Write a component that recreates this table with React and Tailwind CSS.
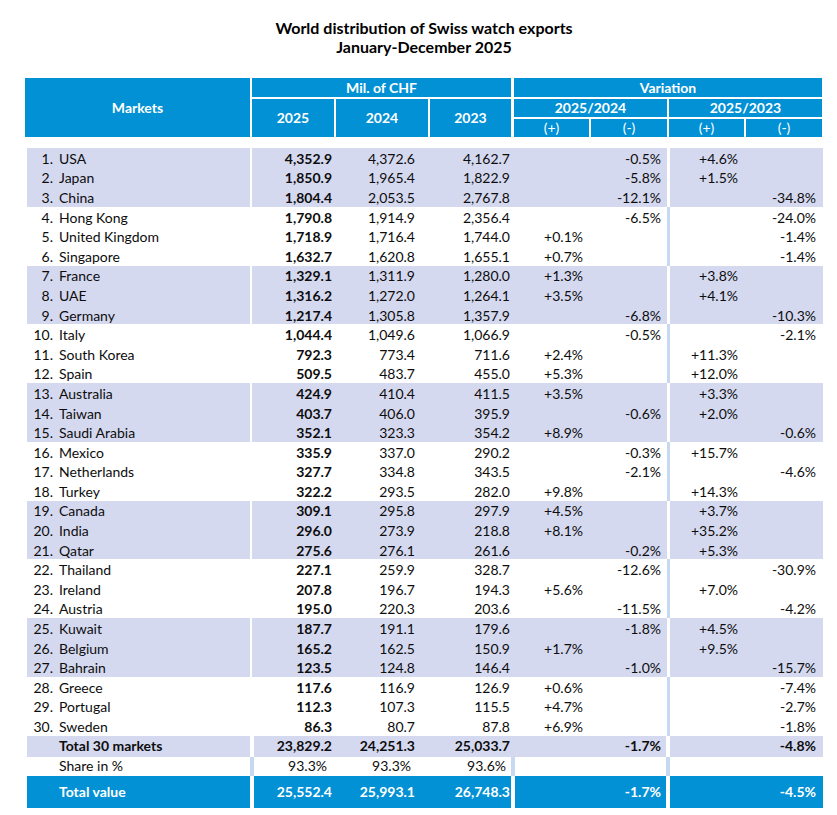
import React from 'react';

const rows = [
  ['1.', 'USA', '4,352.9', '4,372.6', '4,162.7', '', '-0.5%', '+4.6%', ''],
  ['2.', 'Japan', '1,850.9', '1,965.4', '1,822.9', '', '-5.8%', '+1.5%', ''],
  ['3.', 'China', '1,804.4', '2,053.5', '2,767.8', '', '-12.1%', '', '-34.8%'],
  ['4.', 'Hong Kong', '1,790.8', '1,914.9', '2,356.4', '', '-6.5%', '', '-24.0%'],
  ['5.', 'United Kingdom', '1,718.9', '1,716.4', '1,744.0', '+0.1%', '', '', '-1.4%'],
  ['6.', 'Singapore', '1,632.7', '1,620.8', '1,655.1', '+0.7%', '', '', '-1.4%'],
  ['7.', 'France', '1,329.1', '1,311.9', '1,280.0', '+1.3%', '', '+3.8%', ''],
  ['8.', 'UAE', '1,316.2', '1,272.0', '1,264.1', '+3.5%', '', '+4.1%', ''],
  ['9.', 'Germany', '1,217.4', '1,305.8', '1,357.9', '', '-6.8%', '', '-10.3%'],
  ['10.', 'Italy', '1,044.4', '1,049.6', '1,066.9', '', '-0.5%', '', '-2.1%'],
  ['11.', 'South Korea', '792.3', '773.4', '711.6', '+2.4%', '', '+11.3%', ''],
  ['12.', 'Spain', '509.5', '483.7', '455.0', '+5.3%', '', '+12.0%', ''],
  ['13.', 'Australia', '424.9', '410.4', '411.5', '+3.5%', '', '+3.3%', ''],
  ['14.', 'Taiwan', '403.7', '406.0', '395.9', '', '-0.6%', '+2.0%', ''],
  ['15.', 'Saudi Arabia', '352.1', '323.3', '354.2', '+8.9%', '', '', '-0.6%'],
  ['16.', 'Mexico', '335.9', '337.0', '290.2', '', '-0.3%', '+15.7%', ''],
  ['17.', 'Netherlands', '327.7', '334.8', '343.5', '', '-2.1%', '', '-4.6%'],
  ['18.', 'Turkey', '322.2', '293.5', '282.0', '+9.8%', '', '+14.3%', ''],
  ['19.', 'Canada', '309.1', '295.8', '297.9', '+4.5%', '', '+3.7%', ''],
  ['20.', 'India', '296.0', '273.9', '218.8', '+8.1%', '', '+35.2%', ''],
  ['21.', 'Qatar', '275.6', '276.1', '261.6', '', '-0.2%', '+5.3%', ''],
  ['22.', 'Thailand', '227.1', '259.9', '328.7', '', '-12.6%', '', '-30.9%'],
  ['23.', 'Ireland', '207.8', '196.7', '194.3', '+5.6%', '', '+7.0%', ''],
  ['24.', 'Austria', '195.0', '220.3', '203.6', '', '-11.5%', '', '-4.2%'],
  ['25.', 'Kuwait', '187.7', '191.1', '179.6', '', '-1.8%', '+4.5%', ''],
  ['26.', 'Belgium', '165.2', '162.5', '150.9', '+1.7%', '', '+9.5%', ''],
  ['27.', 'Bahrain', '123.5', '124.8', '146.4', '', '-1.0%', '', '-15.7%'],
  ['28.', 'Greece', '117.6', '116.9', '126.9', '+0.6%', '', '', '-7.4%'],
  ['29.', 'Portugal', '112.3', '107.3', '115.5', '+4.7%', '', '', '-2.7%'],
  ['30.', 'Sweden', '86.3', '80.7', '87.8', '+6.9%', '', '', '-1.8%'],
];

// rows 1-3, 7-9, 13-15 ... are shaded
const isShaded = (i) => Math.floor(i / 3) % 2 === 0;

function MarketRow({ r, shaded }) {
  const bg = shaded ? 'bg-[#d5d9f0]' : 'bg-white';
  const sep = shaded ? 'bg-white' : 'bg-[#c6d9f0]';
  return (
    <div className="flex h-[19.6px] ml-[2px]">
      <div className={`flex w-[223px] items-center pt-[2px] ${bg}`}>
        <span className="w-[26px] text-right">{r[0]}</span>
        <span className="ml-[6px]">{r[1]}</span>
      </div>
      <div className="w-[2px]" />
      <div className={`flex w-[415px] pt-[2px] ${bg}`}>
        <div className="flex w-[82px] items-center justify-end pr-[2px] font-bold">{r[2]}</div>
        <div className="flex w-[94px] items-center justify-end pr-[13px]">{r[3]}</div>
        <div className="flex w-[84px] items-center justify-end pr-[2px]">{r[4]}</div>
        <div className="flex w-[76px] items-center justify-end pr-[5px]">{r[5]}</div>
        <div className="flex w-[79px] items-center justify-end pr-[6px]">{r[6]}</div>
      </div>
      <div className={`w-[3px] ${sep}`} />
      <div className={`flex w-[153px] pt-[2px] ${bg}`}>
        <div className="flex w-[74px] items-center justify-end pr-[6px]">{r[7]}</div>
        <div className="flex w-[79px] items-center justify-end pr-[7px]">{r[8]}</div>
      </div>
    </div>
  );
}

export default function App() {
  return (
    <div className="min-h-screen bg-white text-[14px] leading-none text-[#0d0d0d]" style={{ fontFamily: 'Lato, "Open Sans", sans-serif' }}>
      <div className="w-[798px] ml-[25px] pt-[18px]">
        <div className="text-center text-[16px] font-bold leading-[19px] text-black">
          <div>World distribution of Swiss watch exports</div>
          <div>January-December 2025</div>
        </div>

        {/* header */}
        <div className="mt-[22px] flex h-[59px] font-bold text-white">
          <div className="flex w-[225px] items-center justify-center bg-[#0391d5]">Markets</div>
          <div className="w-[2px]" />
          <div className="flex w-[259px] flex-col">
            <div className="flex h-[19px] items-center justify-center bg-[#0391d5]">Mil. of CHF</div>
            <div className="h-[2px]" />
            <div className="flex flex-1">
              <div className="flex w-[82px] items-center justify-center bg-[#0391d5]">2025</div>
              <div className="w-[2px]" />
              <div className="flex w-[92px] items-center justify-center bg-[#0391d5]">2024</div>
              <div className="w-[2px]" />
              <div className="flex w-[81px] items-center justify-center bg-[#0391d5]">2023</div>
            </div>
          </div>
          <div className="w-[3px]" />
          <div className="flex w-[308px] flex-col">
            <div className="flex h-[19px] items-center justify-center bg-[#0391d5]">Variation</div>
            <div className="h-[2px]" />
            <div className="flex h-[18px]">
              <div className="flex w-[153px] items-center justify-center bg-[#0391d5]">2025/2024</div>
              <div className="w-[2px]" />
              <div className="flex w-[153px] items-center justify-center bg-[#0391d5]">2025/2023</div>
            </div>
            <div className="h-[2px]" />
            <div className="flex h-[18px] font-normal">
              <div className="flex w-[75px] items-center justify-center bg-[#0391d5]">(+)</div>
              <div className="w-[2px]" />
              <div className="flex w-[76px] items-center justify-center bg-[#0391d5]">(-)</div>
              <div className="w-[2px]" />
              <div className="flex w-[75px] items-center justify-center bg-[#0391d5]">(+)</div>
              <div className="w-[2px]" />
              <div className="flex w-[76px] items-center justify-center bg-[#0391d5]">(-)</div>
            </div>
          </div>
        </div>

        {/* markets */}
        <div className="mt-[11px]">
          {rows.map((r, i) => (
            <MarketRow key={r[0]} r={r} shaded={isShaded(i)} />
          ))}
        </div>

        {/* total 30 markets */}
        <div className="ml-[2px] flex h-[21px] font-bold">
          <div className="flex w-[223px] items-center bg-[#d5d9f0] pl-[32px]">Total 30 markets</div>
          <div className="w-[4px]" />
          <div className="flex w-[412px] bg-[#d5d9f0]">
            <div className="flex w-[80px] items-center justify-end pr-[2px]">23,829.2</div>
            <div className="flex w-[94px] items-center justify-end pr-[13px]">24,251.3</div>
            <div className="flex w-[84px] items-center justify-end pr-[2px]">25,033.7</div>
            <div className="flex w-[154px] items-center justify-end pr-[5px]">-1.7%</div>
          </div>
          <div className="w-[4px]" />
          <div className="flex w-[153px] items-center justify-end bg-[#d5d9f0] pr-[7px]">-4.8%</div>
        </div>

        {/* share */}
        <div className="ml-[2px] flex h-[19px]">
          <div className="flex w-[223px] items-center pl-[32px]">Share in %</div>
          <div className="w-[4px] bg-[#c6d9f0]" />
          <div className="flex w-[257px]">
            <div className="flex w-[80px] items-center justify-end pr-[7px]">93.3%</div>
            <div className="flex w-[94px] items-center justify-end pr-[17px]">93.3%</div>
            <div className="flex w-[83px] items-center justify-end pr-[5px]">93.6%</div>
          </div>
          <div className="w-[4px] bg-[#c6d9f0]" />
          <div className="w-[151px]" />
          <div className="w-[4px] bg-[#c6d9f0]" />
          <div className="w-[153px]" />
        </div>

        {/* total value */}
        <div className="ml-[2px] flex h-[32px] font-bold text-white">
          <div className="flex w-[223px] items-center bg-[#0391d5] pl-[32px]">Total value</div>
          <div className="w-[4px]" />
          <div className="flex w-[257px] bg-[#0391d5]">
            <div className="flex w-[80px] items-center justify-end pr-[2px]">25,552.4</div>
            <div className="flex w-[94px] items-center justify-end pr-[13px]">25,993.1</div>
            <div className="flex w-[83px] items-center justify-end pr-[1px]">26,748.3</div>
          </div>
          <div className="w-[4px]" />
          <div className="flex w-[151px] items-center justify-end bg-[#0391d5] pr-[5px]">-1.7%</div>
          <div className="w-[4px]" />
          <div className="flex w-[153px] items-center justify-end bg-[#0391d5] pr-[7px]">-4.5%</div>
        </div>
      </div>
    </div>
  );
}
